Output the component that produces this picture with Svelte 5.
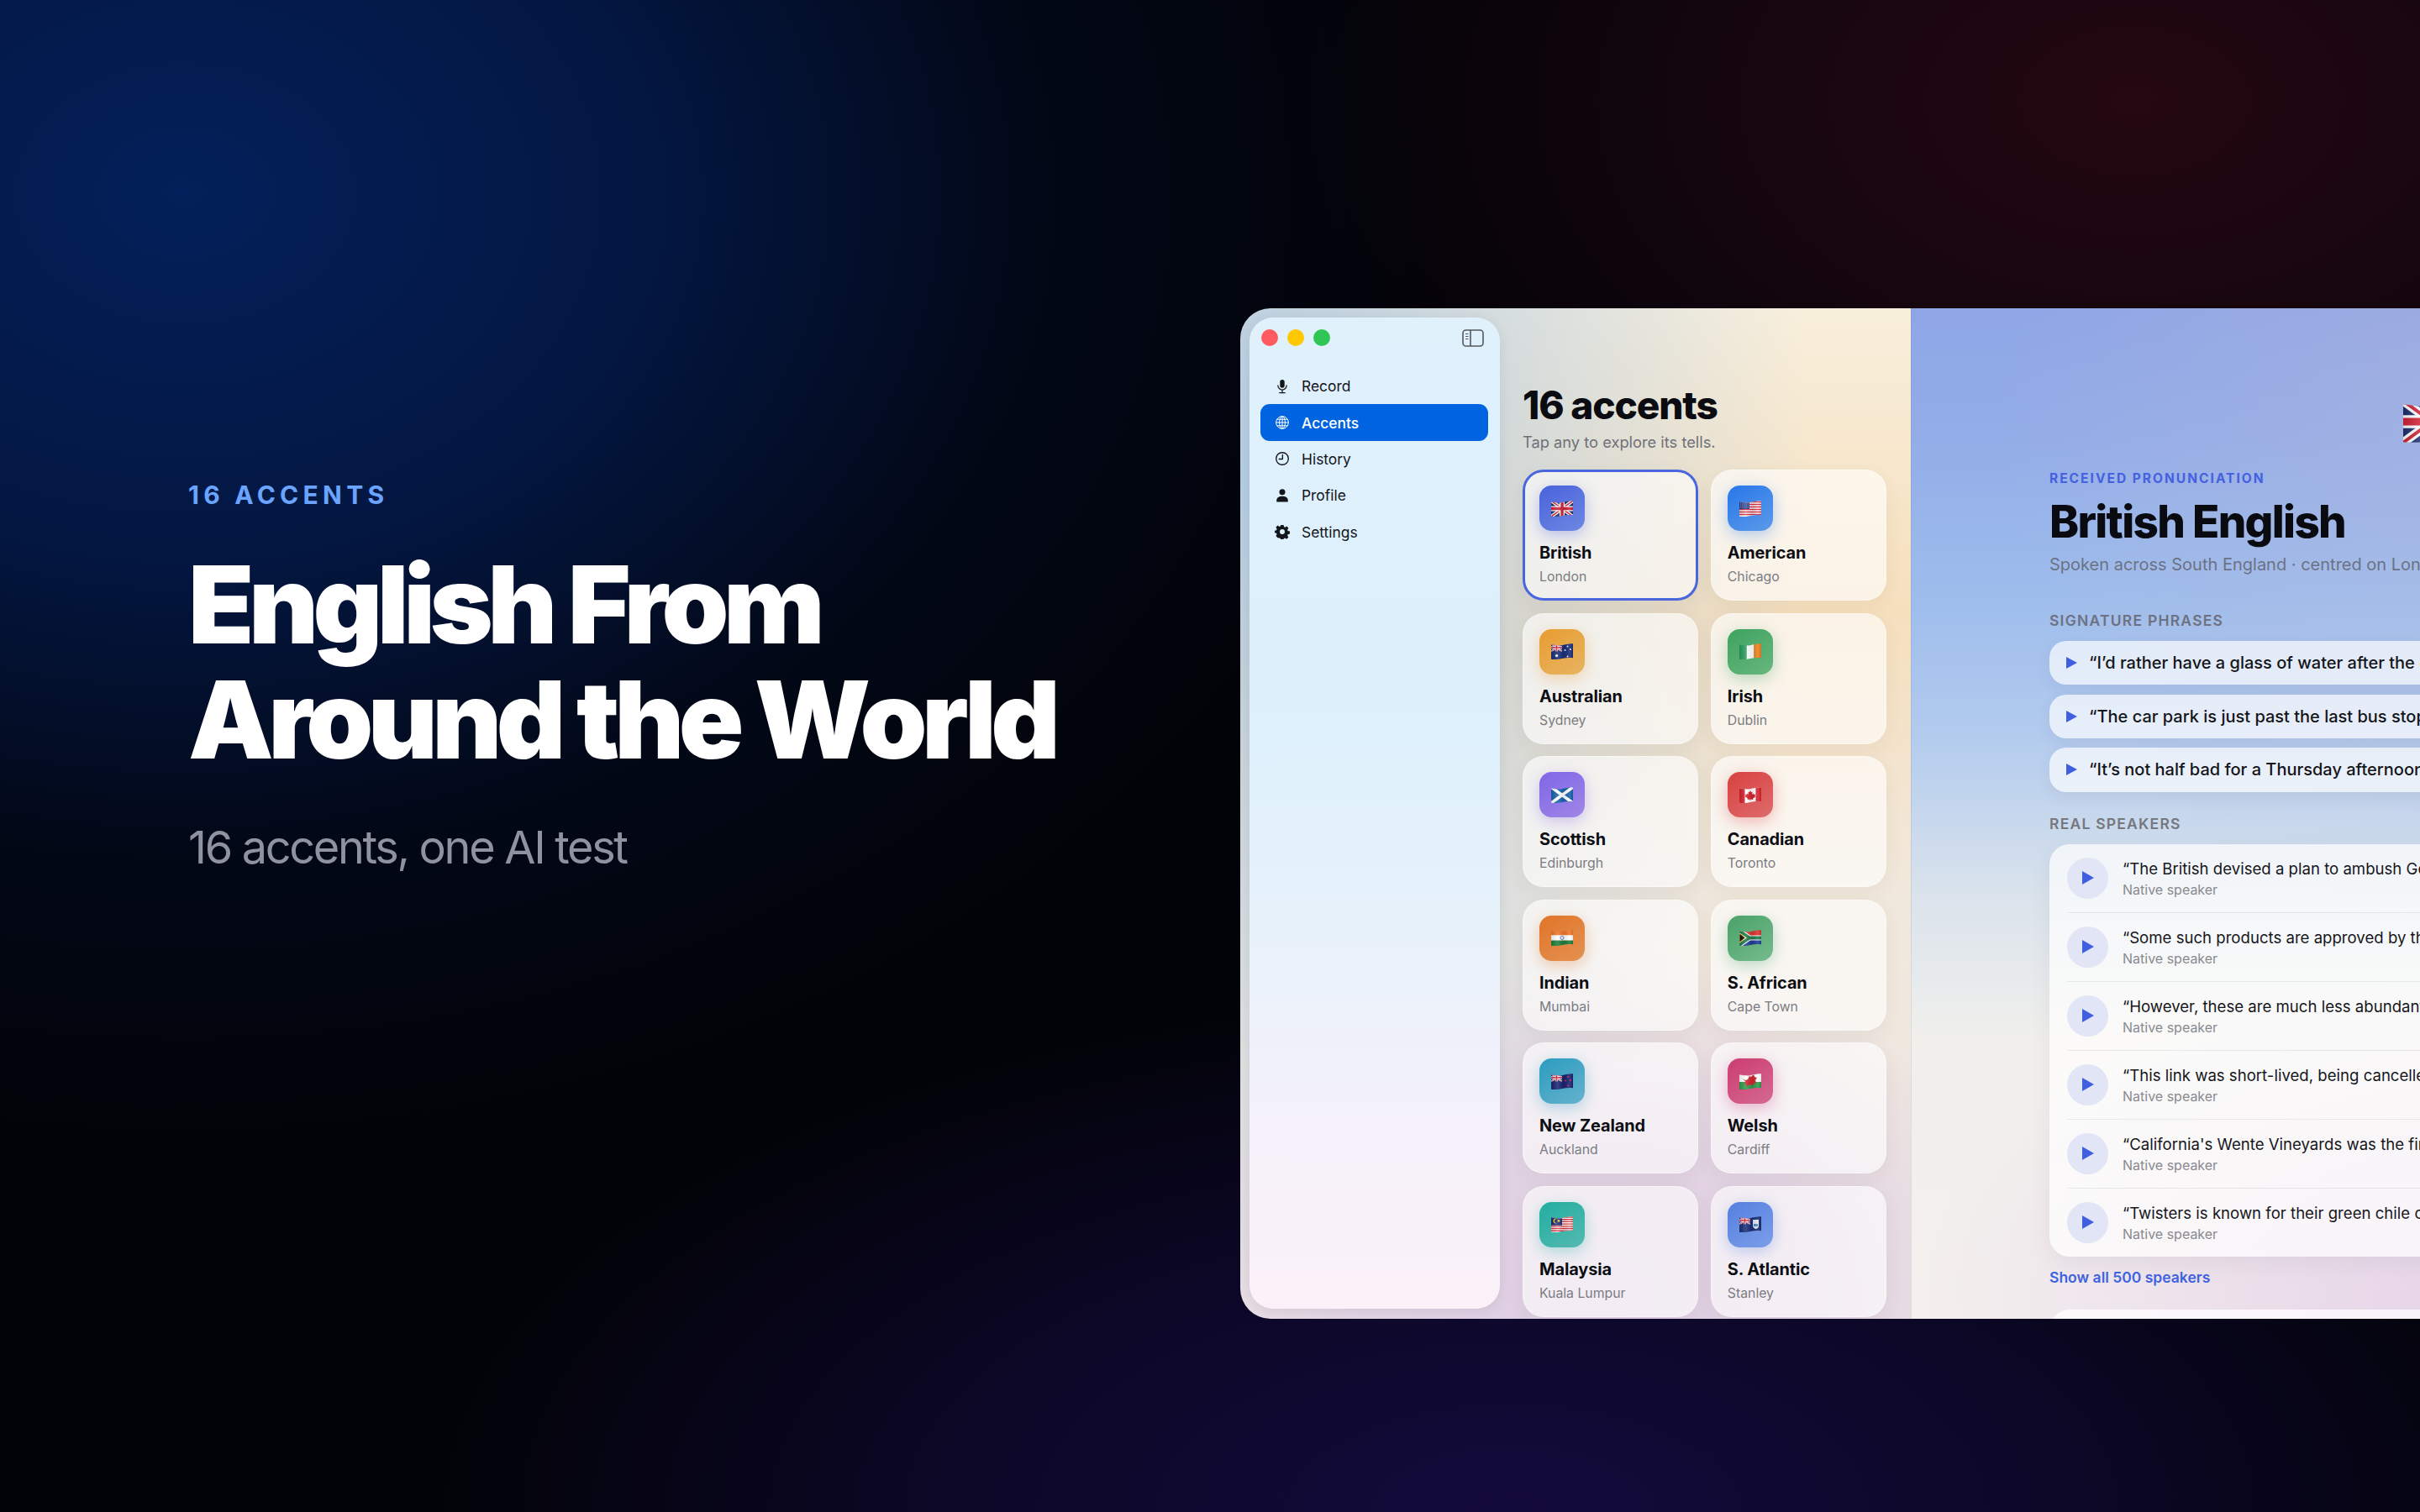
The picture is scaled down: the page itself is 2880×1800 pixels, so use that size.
<script>
  const accents = [
    { code: 'gb', name: 'British', city: 'London', a: '#4a62dc', b: '#6d88e2', selected: true },
    { code: 'us', name: 'American', city: 'Chicago', a: '#2777ea', b: '#5c9ae8' },
    { code: 'au', name: 'Australian', city: 'Sydney', a: '#e89c30', b: '#e8b462' },
    { code: 'ie', name: 'Irish', city: 'Dublin', a: '#3ea35f', b: '#68b67e' },
    { code: 'sc', name: 'Scottish', city: 'Edinburgh', a: '#8066e6', b: '#a086e6' },
    { code: 'ca', name: 'Canadian', city: 'Toronto', a: '#d94040', b: '#dd6c6c' },
    { code: 'in', name: 'Indian', city: 'Mumbai', a: '#e07428', b: '#e49252' },
    { code: 'za', name: 'S. African', city: 'Cape Town', a: '#4aa268', b: '#76ba8e' },
    { code: 'nz', name: 'New Zealand', city: 'Auckland', a: '#2a9cc0', b: '#66b2cc' },
    { code: 'wa', name: 'Welsh', city: 'Cardiff', a: '#cc3c70', b: '#d46a90' },
    { code: 'my', name: 'Malaysia', city: 'Kuala Lumpur', a: '#20aea0', b: '#56b9b1' },
    { code: 'fk', name: 'S. Atlantic', city: 'Stanley', a: '#5580e0', b: '#7c9ee8' }
  ];
  const nav = ['Record', 'Accents', 'History', 'Profile', 'Settings'];
  const phrases = [
    '“I’d rather have a glass of water after the dinner.”',
    '“The car park is just past the last bus stop on the left.”',
    '“It’s not half bad for a Thursday afternoon, is it?”'
  ];
  const speakers = [
    '“The British devised a plan to ambush General Washington.”',
    '“Some such products are approved by the authorities.”',
    '“However, these are much less abundant in the south.”',
    '“This link was short-lived, being cancelled within a year.”',
    '“California\'s Wente Vineyards was the first to do so.”',
    '“Twisters is known for their green chile cheeseburgers.”'
  ];
</script>

{#snippet jack(x, y, w, h)}
  <svg {x} {y} width={w} height={h} viewBox="0 0 26 19" preserveAspectRatio="none">
    <rect width="26" height="19" fill="#1f2f6f" />
    <path d="M0 0L26 19M26 0L0 19" stroke="#fff" stroke-width="4" />
    <path d="M0 0L26 19M26 0L0 19" stroke="#cf2338" stroke-width="1.5" />
    <path d="M13 0V19M0 9.5H26" stroke="#fff" stroke-width="6" />
    <path d="M13 0V19M0 9.5H26" stroke="#cf2338" stroke-width="3.4" />
  </svg>
{/snippet}

{#snippet flag(code, cls)}
  <svg class={cls} viewBox="0 0 26 19" aria-hidden="true">
    <g clip-path="url(#wave)">
      {#if code === 'gb'}
        {@render jack(0, 0, 26, 19)}
      {:else if code === 'us'}
        <rect width="26" height="19" fill="#fff" />
        <path d="M0 1.5H26M0 4.5H26M0 7.5H26M0 10.5H26M0 13.5H26M0 16.5H26" stroke="#cf2b3c" stroke-width="1.5" />
        <rect width="12" height="10" fill="#2b3f8c" />
        <path d="M1 2H11M1 4H11M1 6H11M1 8H11" stroke="#cdd4ee" stroke-width=".7" stroke-dasharray=".8 1" />
      {:else if code === 'au'}
        <rect width="26" height="19" fill="#1a2e78" />
        {@render jack(0, 0, 13, 9.5)}
        <circle cx="6.5" cy="14.5" r="1.6" fill="#fff" />
        <circle cx="19.5" cy="3.5" r=".9" fill="#fff" /><circle cx="19.5" cy="15.5" r=".9" fill="#fff" />
        <circle cx="16.5" cy="8" r=".9" fill="#fff" /><circle cx="23" cy="7" r=".9" fill="#fff" />
      {:else if code === 'ie'}
        <rect width="9" height="19" fill="#2a9a5c" /><rect x="8.7" width="8.7" height="19" fill="#fff" /><rect x="17.3" width="8.7" height="19" fill="#e8821e" />
      {:else if code === 'sc'}
        <rect width="26" height="19" fill="#1763ab" />
        <path d="M0 0L26 19M26 0L0 19" stroke="#fff" stroke-width="3.6" />
      {:else if code === 'ca'}
        <rect width="26" height="19" fill="#fff" /><rect width="6.5" height="19" fill="#d6232c" /><rect x="19.5" width="6.5" height="19" fill="#d6232c" />
        <path d="M13 4l1.2 2.2 1.4-.6-.6 3.4 1.6-1.4.6 1.3 2-.3-.7 2 .9.6-3.3 2.4.3 1.3-3-.4V16h-.8v-1.5l-3 .4.3-1.3-3.3-2.4.9-.6-.7-2 2 .3.6-1.3 1.6 1.4-.6-3.4 1.4.6z" fill="#d6232c" />
      {:else if code === 'in'}
        <rect width="26" height="6.5" fill="#f0762a" /><rect y="6.3" width="26" height="6.5" fill="#fff" /><rect y="12.6" width="26" height="6.5" fill="#1e7d3a" />
        <circle cx="13" cy="9.5" r="2" fill="none" stroke="#2f3f96" stroke-width=".7" />
      {:else if code === 'za'}
        <rect width="26" height="9.5" fill="#d8362e" /><rect y="9.5" width="26" height="9.5" fill="#1f3d94" />
        <path d="M0 1L12 9.5L0 18M12 9.5H26" fill="none" stroke="#fff" stroke-width="6" />
        <path d="M0 1L12 9.5L0 18M12 9.5H26" fill="none" stroke="#1f7d4b" stroke-width="3.8" />
        <path d="M0 4L7 9.5L0 15Z" fill="#14110f" stroke="#f0bc26" stroke-width="1" />
      {:else if code === 'nz'}
        <rect width="26" height="19" fill="#1b2270" />
        {@render jack(0, 0, 13, 9.5)}
        <circle cx="20" cy="4" r="1" fill="#d3293c" /><circle cx="17" cy="8.5" r="1" fill="#d3293c" /><circle cx="23" cy="8" r="1" fill="#d3293c" /><circle cx="20" cy="14.5" r="1" fill="#d3293c" />
      {:else if code === 'wa'}
        <rect width="26" height="10" fill="#fff" /><rect y="10" width="26" height="9" fill="#2f9c4a" />
        <path d="M4 6l3 2 3-1 2-4 2 1 3-3 1 3 3 1-2 3 1 3-3 1-1 3-1-2-4 1-3 2 .5-3-3-1 2-2z" fill="#cf2430" />
      {:else if code === 'my'}
        <rect width="26" height="19" fill="#fff" />
        <path d="M0 1H26M0 3.7H26M0 6.4H26M0 9.1H26M0 11.8H26M0 14.5H26M0 17.2H26" stroke="#d4313c" stroke-width="1.35" />
        <rect width="13" height="10.8" fill="#1c2d78" />
        <circle cx="5.5" cy="5.4" r="3" fill="#f4c81e" /><circle cx="6.5" cy="5.4" r="2.5" fill="#1c2d78" /><circle cx="9" cy="5.4" r="1.4" fill="#f4c81e" />
      {:else}
        <rect width="26" height="19" fill="#1a2e78" />
        {@render jack(0, 0, 13, 9.5)}
        <path d="M16 4H23V11Q23 14 19.5 15Q16 14 16 11Z" fill="#dfe6ee" /><rect x="17" y="9" width="5" height="3" fill="#4f8bc4" />
      {/if}
      <rect width="26" height="19" fill="url(#sheen)" />
    </g>
  </svg>
{/snippet}

{#snippet navIcon(i)}
  <svg class="navicon" viewBox="0 0 20 20" aria-hidden="true">
    {#if i === 0}
      <rect x="7" y="1" width="6" height="11" rx="3" fill="currentColor" />
      <path d="M4.3 8.8a5.7 5.7 0 0 0 11.4 0M10 14.6V18M6.4 18.4h7.2" fill="none" stroke="currentColor" stroke-width="1.4" stroke-linecap="round" />
    {:else if i === 1}
      <g fill="none" stroke="currentColor" stroke-width="1.1">
        <circle cx="10" cy="10" r="8.2" />
        <ellipse cx="10" cy="10" rx="3.8" ry="8.2" />
        <path d="M10 1.8V18.2M1.8 10H18.2M3 5.8H17M3 14.2H17" />
      </g>
    {:else if i === 2}
      <circle cx="10" cy="10" r="8.1" fill="none" stroke="currentColor" stroke-width="1.5" />
      <path d="M10.4 4.8V10.6H5.8" fill="none" stroke="currentColor" stroke-width="1.5" stroke-linecap="round" stroke-linejoin="round" />
    {:else if i === 3}
      <circle cx="10" cy="5.4" r="3.9" fill="currentColor" />
      <path d="M2.5 18.4V16c0-3.2 3-5.3 7.5-5.3s7.5 2.1 7.5 5.3v2.4z" fill="currentColor" />
    {:else}
      <path fill="currentColor" fill-rule="evenodd" d="M8.2 1h3.6l.5 2.5 1.5.7 2.2-1.4 2.2 2.5-1.4 2.2.6 1.5 2.6.5v3.4l-2.6.6-.6 1.4 1.4 2.2-2.5 2.5-2.2-1.4-1.5.6-.5 2.6H8.2l-.5-2.6-1.5-.6L4 18.1l-2.5-2.5 1.4-2.2-.6-1.4-2.3-.6V8.5l2.3-.5.6-1.5L1.5 4.3 4 1.8l2.2 1.4 1.5-.7zM10 6.7a3.3 3.3 0 1 0 0 6.6 3.3 3.3 0 0 0 0-6.6z" />
    {/if}
  </svg>
{/snippet}

<svg class="defs" width="0" height="0" aria-hidden="true">
  <defs>
    <clipPath id="wave">
      <path d="M0 1.6C5 2.2 9 3 13 2.2S22 0 26 .4V17.2C21 16.8 17 17 13 18S4 19.6 0 18.8Z" />
    </clipPath>
    <linearGradient id="sheen" x1="0" x2="1" y1="0" y2="0">
      <stop offset="0" stop-color="#000" stop-opacity=".12" />
      <stop offset=".3" stop-color="#fff" stop-opacity=".14" />
      <stop offset=".6" stop-color="#000" stop-opacity=".08" />
      <stop offset=".85" stop-color="#fff" stop-opacity=".12" />
      <stop offset="1" stop-color="#000" stop-opacity=".1" />
    </linearGradient>
  </defs>
</svg>

<div class="page">
  <section class="hero">
    <p class="kicker">16 ACCENTS</p>
    <h1>English From<br />Around the World</h1>
    <p class="tag">16 accents, one AI test</p>
  </section>

  <div class="window">
    <aside class="sidebar">
      <div class="titlebar">
        <span class="dot red"></span><span class="dot yellow"></span><span class="dot green"></span>
        <svg class="toggle" viewBox="0 0 26 21" aria-hidden="true">
          <rect x="1" y="1" width="24" height="19" rx="3.5" fill="none" stroke="#55585e" stroke-width="1.6" />
          <path d="M10 1V20" stroke="#55585e" stroke-width="1.6" />
          <path d="M4 5.5H7.5M4 8.5H7.5M4 11.5H7.5" stroke="#55585e" stroke-width="1.2" />
        </svg>
      </div>
      <nav>
        {#each nav as item, i}
          <div class="navrow" class:active={i === 1}>
            {@render navIcon(i)}
            <span>{item}</span>
          </div>
        {/each}
      </nav>
    </aside>

    <main class="list">
      <h2>16 accents</h2>
      <p class="hint">Tap any to explore its tells.</p>
      <div class="grid">
        {#each accents as c}
          <div class="card" class:selected={c.selected}>
            <div class="badge" style="--a:{c.a};--b:{c.b}">
              {@render flag(c.code, 'flag')}
            </div>
            <div class="name">{c.name}</div>
            <div class="city">{c.city}</div>
          </div>
        {/each}
      </div>
    </main>

    <section class="detail">
      <div class="bigflag">{@render flag('gb', 'flag-lg')}</div>
      <div class="rp">RECEIVED PRONUNCIATION</div>
      <h3>British English</h3>
      <p class="spoken">Spoken across South England · centred on London and the Home Counties</p>

      <div class="label first">SIGNATURE PHRASES</div>
      <div class="phrases">
        {#each phrases as p}
          <div class="phrase"><span class="tri small"></span><span>{p}</span></div>
        {/each}
      </div>

      <div class="label second">REAL SPEAKERS</div>
      <div class="speakers">
        {#each speakers as s}
          <div class="speaker">
            <span class="play"><span class="tri"></span></span>
            <div class="says">
              <div class="quote">{s}</div>
              <div class="who">Native speaker</div>
            </div>
          </div>
        {/each}
      </div>
      <div class="showall">Show all 500 speakers</div>
      <div class="nextcard"></div>
    </section>
  </div>
</div>

<style>
  :global(body) {
    margin: 0;
    background: #02040a;
  }
  .defs {
    position: absolute;
  }
  .page {
    width: 2880px;
    height: 1800px;
    overflow: hidden;
    display: flex;
    align-items: flex-start;
    font-family: Inter, 'Noto Sans', sans-serif;
    background:
      radial-gradient(1500px 1150px at 220px 230px, #03205a 0%, rgba(4, 30, 86, .72) 38%, rgba(3, 20, 60, .28) 68%, rgba(3, 20, 60, 0) 100%),
      radial-gradient(1000px 640px at 2540px 120px, #240812 0%, rgba(36, 8, 18, .6) 45%, rgba(36, 8, 18, 0) 100%),
      radial-gradient(1300px 620px at 1800px 1800px, #130a3c 0%, rgba(19, 10, 60, .6) 50%, rgba(19, 10, 60, 0) 100%),
      #020308;
  }

  .hero {
    flex: 0 0 1252px;
    padding-left: 224px;
    padding-top: 567px;
    color: #fff;
  }
  .kicker {
    margin: 0;
    font-size: 30px;
    line-height: 44px;
    font-weight: 700;
    letter-spacing: .175em;
    color: #6aa4ff;
  }
  h1 {
    margin: 40px 0 0;
    font-size: 128px;
    line-height: 137px;
    font-weight: 900;
    letter-spacing: -.051em;
    white-space: nowrap;
  }
  .tag {
    margin: 50px 0 0;
    font-size: 54px;
    line-height: 68px;
    font-weight: 400;
    letter-spacing: -.043em;
    color: #8f93a0;
  }

  .window {
    flex: 0 0 1700px;
    height: 1203px;
    margin-top: 367px;
    border-radius: 36px 0 0 36px;
    overflow: hidden;
    display: flex;
    background:
      radial-gradient(680px 1000px at 0 200px, #b4cce2 0%, rgba(180, 204, 226, .55) 45%, rgba(180, 204, 226, 0) 100%),
      radial-gradient(560px 420px at 420px 1180px, #dfcde3 0%, rgba(223, 205, 227, .75) 50%, rgba(223, 205, 227, 0) 100%),
      linear-gradient(180deg, #f8efdc 0%, #f6dfbd 30%, #f1e8dc 58%, #ede8e4 100%);
  }

  .sidebar {
    flex: 0 0 298px;
    margin: 11px 0 12px 11px;
    border-radius: 28px;
    background: linear-gradient(180deg, #e0f1fc 0%, #dcf0fc 38%, #e8f2fb 62%, #f6f1fa 84%, #fbf1f9 100%);
    box-shadow: 0 2px 14px rgba(40, 50, 80, .1);
  }
  .titlebar {
    display: flex;
    gap: 11px;
    height: 46px;
    padding: 14px 19px 0 14px;
  }
  .dot {
    width: 20px;
    height: 20px;
    border-radius: 50%;
  }
  .red { background: #ff5a5f; }
  .yellow { background: #ffc800; }
  .green { background: #2fc655; }
  .toggle {
    width: 26px;
    height: 21px;
    margin-left: auto;
  }
  nav {
    padding: 0 14px 0 13px;
  }
  .navrow {
    height: 43.4px;
    display: flex;
    align-items: center;
    gap: 14px;
    padding-left: 17px;
    border-radius: 11px;
    font-size: 17.4px;
    font-weight: 400;
    color: #14161c;
  }
  .navrow.active {
    background: #0064e0;
    color: #fff;
    font-weight: 500;
  }
  .navicon {
    width: 18px;
    height: 18px;
    flex: none;
  }

  .list {
    flex: 0 0 433px;
    padding: 85px 29px 0 27px;
  }
  h2 {
    margin: 0;
    font-size: 46px;
    line-height: 60px;
    font-weight: 800;
    letter-spacing: -.025em;
    color: #0b0c11;
  }
  .hint {
    margin: 1px 0 0;
    font-size: 18.3px;
    line-height: 26px;
    color: #6f7178;
  }
  .grid {
    margin-top: 20px;
    display: grid;
    grid-template-columns: 1fr 1fr;
    grid-auto-rows: 156px;
    gap: 14.6px;
  }
  .card {
    box-sizing: border-box;
    padding: 18px 19px 0;
    border-radius: 25px;
    border: 1px solid rgba(255, 255, 255, .35);
    background: rgba(255, 255, 255, .62);
    box-shadow: 0 6px 22px rgba(70, 60, 50, .06);
  }
  .card.selected {
    border: 3px solid #4a66df;
    padding: 16px 17px 0;
  }
  .badge {
    width: 54px;
    height: 54px;
    border-radius: 14.5px;
    display: flex;
    align-items: center;
    justify-content: center;
    background: linear-gradient(145deg, var(--a), var(--b));
    box-shadow: 0 5px 18px color-mix(in srgb, var(--a) 35%, transparent);
  }
  .flag {
    width: 26px;
    height: 19px;
  }
  .name {
    margin-top: 13px;
    font-size: 19.9px;
    line-height: 26px;
    font-weight: 700;
    color: #0d0e13;
    letter-spacing: -.005em;
  }
  .city {
    margin-top: 6px;
    font-size: 15.8px;
    line-height: 20px;
    color: #7b7c82;
  }

  .detail {
    flex: 1;
    box-sizing: border-box;
    padding: 110px 0 0 165px;
    overflow: hidden;
    box-shadow: inset 1px 0 0 rgba(120, 120, 130, .16);
    background:
      radial-gradient(560px 640px at 660px 100px, rgba(190, 185, 215, .34) 0%, rgba(190, 185, 215, 0) 100%),
      radial-gradient(700px 420px at 700px 1200px, #e6d2e8 0%, rgba(230, 210, 232, 0) 100%),
      linear-gradient(180deg, #8ea6e6 0%, #93ade8 13%, #9dbcec 28%, #b2cbee 42%, #dae3ec 58%, #f0efec 72%, #f4f0ee 100%);
  }
  .bigflag {
    margin-left: 421px;
    height: 50px;
  }
  .flag-lg {
    width: 68px;
    height: 50px;
    display: block;
  }
  .rp {
    margin-top: 33px;
    font-size: 15.5px;
    line-height: 20px;
    font-weight: 700;
    letter-spacing: .13em;
    color: #4560e0;
  }
  h3 {
    margin: 10px 0 0;
    font-size: 53px;
    line-height: 62px;
    font-weight: 800;
    letter-spacing: -.032em;
    color: #0a0b10;
    white-space: nowrap;
  }
  .spoken {
    margin: 6px 0 0;
    font-size: 20px;
    line-height: 28px;
    color: #6c7285;
    white-space: nowrap;
  }
  .label {
    font-size: 17.5px;
    line-height: 22px;
    font-weight: 600;
    letter-spacing: .07em;
    color: #6d7182;
  }
  .label.first { margin-top: 41.5px; }
  .label.second { margin-top: 27px; color: #75777f; }
  .phrases {
    margin-top: 13.5px;
    display: flex;
    flex-direction: column;
    gap: 11.2px;
  }
  .phrase {
    height: 52.4px;
    display: flex;
    align-items: center;
    gap: 14px;
    padding-left: 20px;
    border-radius: 20px;
    background: rgba(255, 255, 255, .68);
    box-shadow: 0 6px 18px rgba(60, 70, 100, .08);
    font-size: 20px;
    font-weight: 500;
    color: #14151a;
    white-space: nowrap;
  }
  .tri {
    width: 0;
    height: 0;
    border-style: solid;
    border-color: transparent transparent transparent #3f5fe0;
    border-width: 8px 0 8px 14px;
    flex: none;
  }
  .tri.small {
    border-width: 7px 0 7px 13px;
  }
  .speakers {
    margin-top: 13.5px;
    border-radius: 24px;
    background: rgba(255, 255, 255, .7);
    box-shadow: 0 8px 26px rgba(70, 60, 90, .08);
    padding: 0 0 0 21px;
  }
  .speaker {
    box-sizing: border-box;
    height: 81.9px;
    display: flex;
    align-items: center;
    gap: 17px;
    border-bottom: 1px solid rgba(60, 60, 70, .09);
  }
  .speaker:last-child {
    border-bottom: 0;
  }
  .play {
    width: 49px;
    height: 49px;
    border-radius: 50%;
    background: #e2e5f5;
    display: flex;
    align-items: center;
    justify-content: center;
    flex: none;
  }
  .says {
    padding-top: 2px;
  }
  .quote {
    font-size: 18.6px;
    line-height: 26px;
    color: #16171c;
    white-space: nowrap;
  }
  .who {
    font-size: 16px;
    line-height: 24px;
    color: #898a90;
  }
  .showall {
    margin-top: 13px;
    font-size: 17.5px;
    line-height: 24px;
    font-weight: 600;
    color: #3f63e0;
  }
  .nextcard {
    margin-top: 25.5px;
    height: 60px;
    border-radius: 24px 0 0 0;
    background: rgba(255, 255, 255, .72);
  }
</style>
